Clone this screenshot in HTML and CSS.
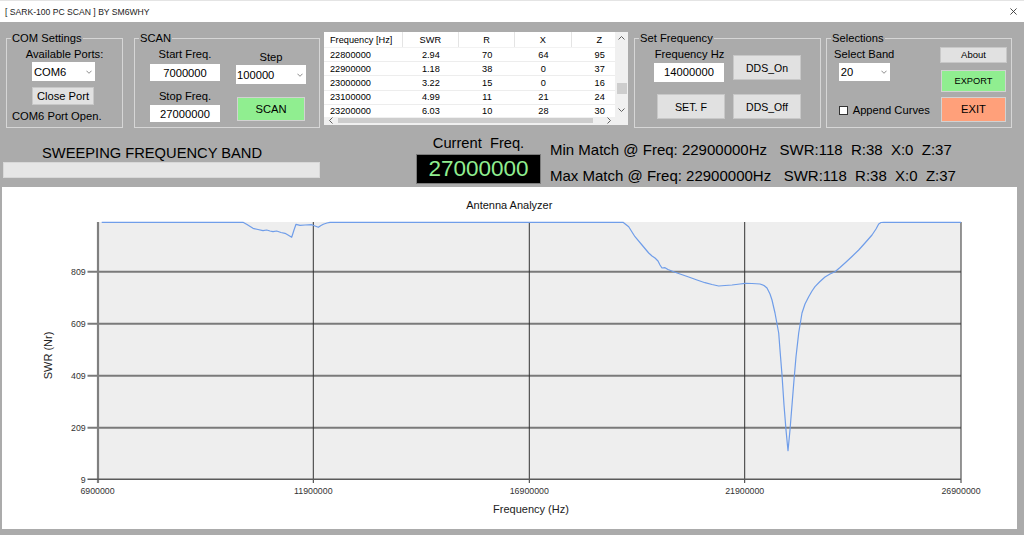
FILE: index.html
```html
<!DOCTYPE html>
<html>
<head>
<meta charset="utf-8">
<title>SARK-100 PC SCAN</title>
<link rel="stylesheet" href="styles.css">
</head>
<body>
<div class="titlebar">
  <span class="title">[ SARK-100 PC SCAN ] BY SM6WHY</span>
  <svg class="close" viewBox="0 0 8 8"><path d="M0.5 0.5 L7.5 7.5 M7.5 0.5 L0.5 7.5" stroke="#333" stroke-width="1" fill="none"/></svg>
</div>

<div class="top">
  <fieldset class="grp com">
    <legend>COM Settings</legend>
    <div class="com-body">
      <div class="lbl lbl-ports">Available Ports:</div>
      <div class="combo combo-com"><span>COM6</span><svg class="chev" viewBox="0 0 7 4"><polyline points="0.5,0.5 3.5,3.5 6.5,0.5" fill="none" stroke="#7a7a7a" stroke-width="1"/></svg></div>
      <div class="btn btn-close">Close Port</div>
      <div class="lbl status">COM6 Port Open.</div>
    </div>
  </fieldset>

  <fieldset class="grp scan">
    <legend>SCAN</legend>
    <div class="scan-body">
      <div class="col scan-c1">
        <div class="lbl">Start Freq.</div>
        <div class="input in-start">7000000</div>
        <div class="lbl lbl-stop">Stop Freq.</div>
        <div class="input in-stop">27000000</div>
      </div>
      <div class="col scan-c2">
        <div class="lbl">Step</div>
        <div class="combo combo-step"><span>100000</span><svg class="chev" viewBox="0 0 7 4"><polyline points="0.5,0.5 3.5,3.5 6.5,0.5" fill="none" stroke="#7a7a7a" stroke-width="1"/></svg></div>
        <div class="btn btn-green btn-scan">SCAN</div>
      </div>
    </div>
  </fieldset>

  <div class="dgv">
    <div class="dgv-main">
      <div class="dgv-view">
        <div class="dgv-row dgv-head"><span>Frequency [Hz]</span><span>SWR</span><span>R</span><span>X</span><span>Z</span></div>
        <div class="dgv-row"><span>22800000</span><span>2.94</span><span>70</span><span>64</span><span>95</span></div>
        <div class="dgv-row"><span>22900000</span><span>1.18</span><span>38</span><span>0</span><span>37</span></div>
        <div class="dgv-row"><span>23000000</span><span>3.22</span><span>15</span><span>0</span><span>16</span></div>
        <div class="dgv-row"><span>23100000</span><span>4.99</span><span>11</span><span>21</span><span>24</span></div>
        <div class="dgv-row"><span>23200000</span><span>6.03</span><span>10</span><span>28</span><span>30</span></div>
      </div>
      <div class="vscroll">
        <div class="sb-arrow sb-up"><svg viewBox="0 0 7 4"><polyline points="0.5,3.5 3.5,0.5 6.5,3.5" fill="none" stroke="#606060" stroke-width="1"/></svg></div>
        <div class="vthumb"></div>
        <div class="sb-arrow sb-down"><svg viewBox="0 0 7 4"><polyline points="0.5,0.5 3.5,3.5 6.5,0.5" fill="none" stroke="#606060" stroke-width="1"/></svg></div>
      </div>
    </div>
    <div class="hscroll">
      <div class="hs-arrow"><svg viewBox="0 0 4 7"><polyline points="3.5,0.5 0.5,3.5 3.5,6.5" fill="none" stroke="#606060" stroke-width="1"/></svg></div>
      <div class="hthumb"></div>
      <div class="hs-arrow hs-right"><svg viewBox="0 0 4 7"><polyline points="0.5,0.5 3.5,3.5 0.5,6.5" fill="none" stroke="#606060" stroke-width="1"/></svg></div>
      <div class="hs-corner"></div>
    </div>
  </div>

  <fieldset class="grp setf">
    <legend>Set Frequency</legend>
    <div class="setf-body">
      <div class="col sf-c1">
        <div class="lbl lbl-fhz">Frequency Hz</div>
        <div class="input in-freq">14000000</div>
        <div class="btn btn-setf">SET. F</div>
      </div>
      <div class="col sf-c2">
        <div class="btn btn-on">DDS_On</div>
        <div class="btn btn-off">DDS_Off</div>
      </div>
    </div>
  </fieldset>

  <fieldset class="grp sel">
    <legend>Selections</legend>
    <div class="sel-body">
      <div class="col sel-c1">
        <div class="lbl">Select Band</div>
        <div class="combo combo-band"><span>20</span><svg class="chev" viewBox="0 0 7 4"><polyline points="0.5,0.5 3.5,3.5 6.5,0.5" fill="none" stroke="#7a7a7a" stroke-width="1"/></svg></div>
        <div class="chk-row"><span class="chk"></span><span>Append Curves</span></div>
      </div>
      <div class="col sel-c2">
        <div class="btn btn-about">About</div>
        <div class="btn btn-green btn-export">EXPORT</div>
        <div class="btn btn-exit">EXIT</div>
      </div>
    </div>
  </fieldset>
</div>

<div class="mid">
  <div class="sweep">
    <div class="sweep-lbl">SWEEPING FREQUENCY BAND</div>
    <div class="progress"></div>
  </div>
  <div class="cur">
    <div class="cur-lbl">Current  Freq.</div>
    <div class="display">27000000</div>
  </div>
  <div class="match">
    <div class="match-line">Min Match @ Freq: 22900000Hz   SWR:118  R:38  X:0  Z:37</div>
    <div class="match-line">Max Match @ Freq: 22900000Hz   SWR:118  R:38  X:0  Z:37</div>
  </div>
</div>

<div class="chart">
  <svg class="chart-svg" width="1015" height="342" viewBox="2 187 1015 342">
    <text class="ch-title" x="509.3" y="209" text-anchor="middle">Antenna Analyzer</text>
    <rect x="98" y="222" width="863" height="257.3" fill="#eeeeee"/>
    <g stroke="#7a7a7a" stroke-width="2">
      <line x1="87.5" y1="271.7" x2="961" y2="271.7"/>
      <line x1="87.5" y1="323.8" x2="961" y2="323.8"/>
      <line x1="87.5" y1="375.7" x2="961" y2="375.7"/>
      <line x1="87.5" y1="427.7" x2="961" y2="427.7"/>
    </g>
    <g stroke="#333" stroke-width="1">
      <line x1="313.3" y1="222" x2="313.3" y2="483"/>
      <line x1="529.3" y1="222" x2="529.3" y2="483"/>
      <line x1="744.7" y1="222" x2="744.7" y2="483"/>
      <line x1="961" y1="222" x2="961" y2="483"/>
    </g>
    <line x1="98" y1="222" x2="98" y2="483" stroke="#808080" stroke-width="2.2"/>
    <line x1="87.5" y1="479.3" x2="961" y2="479.3" stroke="#5a5a5a" stroke-width="1.6"/>
    <polyline fill="none" stroke="#6f9de9" stroke-width="1.2" stroke-linejoin="round" points="101.7,222.3 243,222.3 247,224.5 253,228.3 258,229.5 263,230.7 266.7,230 270,231 273,231.7 276.7,231 281,232.5 285,233.3 288,235 291.7,237.3 294,230 296,224.3 300,225.3 305,225 311.7,224.7 315,226 318.3,227.3 321,225.5 323.3,224.3 327,223 330,222.3 623,222.3 628.7,226.7 632,232 635,236.7 642,245 648.7,253 652,256 655,258 658,261 660,265 662,268 665,267.7 668,269.5 673.7,271.7 680,274 688.7,277 697,280 705,282.7 712,284.5 718.7,286 725,285.5 732,285 740,284 745,283.3 752,283.5 760,284 764,285.5 767,288 770,294 772,300 775,313 778.7,333 780,350 782,375 784,405 786,430 788,450.7 790,430 792,405 794,380 796,356.7 798.7,333 802,313 805,304 808.7,296.7 812,291 815,286.7 820,281.5 825,277 830,274 835,271.7 840,267.5 845,263 852,256.5 858.7,250 865,243 872,235 876,229 878.7,224 881,222.5 883.7,222.3 961,222.3"/>
    <g class="ax-lbl" text-anchor="end">
      <text x="85.7" y="274.9">809</text>
      <text x="85.7" y="327">609</text>
      <text x="85.7" y="378.9">409</text>
      <text x="85.7" y="430.9">209</text>
      <text x="85.7" y="482.5">9</text>
    </g>
    <g class="ax-lbl" text-anchor="middle">
      <text x="97.5" y="493.9">6900000</text>
      <text x="313.3" y="493.9">11900000</text>
      <text x="529.3" y="493.9">16900000</text>
      <text x="744.7" y="493.9">21900000</text>
      <text x="961" y="493.9">26900000</text>
    </g>
    <text class="ax-title" x="52" y="355.5" text-anchor="middle" transform="rotate(-90 52 355.5)">SWR (Nr)</text>
    <text class="ax-title" x="531" y="513.3" text-anchor="middle">Frequency (Hz)</text>
  </svg>
</div>
</body>
</html>
```

FILE: styles.css
```css
* { box-sizing: border-box; }
html, body { margin: 0; padding: 0; }
body {
  width: 1024px;
  height: 535px;
  overflow: hidden;
  background: #ababab;
  font-family: "Liberation Sans", Arial, sans-serif;
  font-size: 11.2px;
  color: #000;
}

/* title bar */
.titlebar {
  height: 22px;
  background: #fff;
  border-top: 1px solid #e4e4e4;
  display: flex;
  align-items: center;
  justify-content: space-between;
  padding: 0 7px 0 5px;
}
.title { font-size: 8.6px; color: #222; white-space: pre; }
.close { width: 7px; height: 7px; display: block; }

/* top controls */
.top {
  height: 106px;
  padding-top: 10px;
  display: flex;
  align-items: flex-start;
}
.grp {
  margin: 0;
  padding: 0;
  border: 1px solid #d6d6d6;
  height: 96px;
  min-width: 0;
}
.grp legend {
  margin-left: 4px;
  padding: 0 1px;
  font-size: 11.2px;
  line-height: 12px;
}
.lbl { line-height: 13px; white-space: nowrap; }
.col { display: flex; flex-direction: column; align-items: center; }

.combo {
  display: flex;
  align-items: center;
  justify-content: space-between;
  background: #fff;
  padding: 0 3px 0 2px;
  white-space: nowrap;
}
.chev { width: 6px; height: 4px; display: block; }
.input {
  background: #fff;
  display: flex;
  align-items: center;
  justify-content: center;
}
.btn {
  background: #e1e1e1;
  border: 1px solid #c8c8c8;
  display: flex;
  align-items: center;
  justify-content: center;
  white-space: nowrap;
}
.btn-green { background: #90ee90; border-color: #d2d2d2; }

/* COM settings */
.com { width: 117px; margin-left: 6px; }
.com-body { display: flex; flex-direction: column; padding-top: 3.5px; }
.lbl-ports { align-self: center; }
.combo-com { margin: 1.5px 0 0 25px; width: 63px; height: 19px; }
.btn-close { margin: 6px 0 0 25px; width: 62px; height: 17.5px; }
.status { margin: 5px 0 0 5px; }

/* SCAN */
.scan { width: 186px; margin-left: 11px; }
.scan-body {
  display: grid;
  grid-template-columns: 70px 70px;
  column-gap: 16px;
  padding-left: 15px;
}
.scan-c1 { padding-top: 3.8px; }
.in-start { margin-top: 3px; width: 70px; height: 17.5px; }
.lbl-stop { margin-top: 8.9px; }
.in-stop { margin-top: 2.1px; width: 70px; height: 17px; }
.scan-c2 { padding-top: 6.8px; }
.combo-step { margin-top: 1.5px; width: 70px; height: 18.7px; padding-left: 1px; }
.btn-scan { margin-top: 12.7px; width: 68px; height: 24.3px; }

/* data grid */
.dgv {
  width: 304px;
  height: 93px;
  margin-left: 4px;
  background: #fff;
  display: flex;
  flex-direction: column;
  font-size: 9.2px;
}
.dgv-main { display: flex; height: 84.7px; }
.dgv-view { width: 291px; overflow: hidden; }
.dgv-row {
  display: grid;
  grid-template-columns: 78.7px 56.3px 56.3px 56.3px 56.3px;
  width: 304px;
  height: 14.1px;
  align-items: center;
  border-bottom: 1px solid #ededed;
}
.dgv-row span { text-align: center; white-space: nowrap; }
.dgv-row span:first-child { text-align: left; padding-left: 6px; }
.dgv-head { height: 16.3px; border-bottom: 1px solid #f2f2f2; }
.dgv-head span {
  height: 100%;
  display: flex;
  align-items: center;
  justify-content: center;
  border-right: 1px solid #e4e4e4;
}
.dgv-head span:first-child { justify-content: flex-start; }

.vscroll {
  width: 13px;
  background: #f0f0f0;
  display: flex;
  flex-direction: column;
  align-items: center;
}
.sb-arrow { height: 13px; width: 13px; display: flex; align-items: center; justify-content: center; }
.sb-arrow svg { width: 7px; height: 4px; display: block; }
.vthumb { margin-top: 38.3px; width: 10px; height: 11px; background: #cdcdcd; }
.sb-down { margin-top: 9.7px; }

.hscroll {
  height: 8.3px;
  background: #f0f0f0;
  display: flex;
  align-items: center;
}
.hs-arrow { width: 13px; height: 8px; display: flex; align-items: center; justify-content: center; }
.hs-arrow svg { width: 4px; height: 7px; display: block; }
.hthumb { margin-left: 1px; width: 255px; height: 5px; background: #cdcdcd; }
.hs-right { margin-left: 9px; }
.hs-corner { width: 13px; height: 100%; background: #f0f0f0; }

/* Set frequency */
.setf { width: 187px; margin-left: 6px; }
.setf-body {
  display: grid;
  grid-template-columns: 71px 68px;
  column-gap: 8px;
  padding-left: 19px;
}
.sf-c1 { padding-top: 3.8px; align-items: flex-start; }
.lbl-fhz { align-self: center; }
.in-freq { margin-top: 2px; width: 70px; height: 19px; }
.btn-setf { margin: 12.6px 0 0 3px; width: 68px; height: 24.7px; font-size: 10.7px; }
.btn-on { margin-top: 11px; width: 68px; height: 25px; font-size: 10.5px; }
.btn-off { margin-top: 14px; width: 68px; height: 25px; font-size: 10.5px; }

/* Selections */
.sel { width: 186px; margin-left: 5px; }
.sel-body {
  display: grid;
  grid-template-columns: 106px 67px;
  padding-left: 7px;
}
.sel-c1 { padding-top: 3.5px; align-items: flex-start; }
.combo-band { margin: 2.2px 0 0 4.7px; width: 51px; height: 18.5px; }
.chk-row {
  margin: 23.3px 0 0 5px;
  display: flex;
  align-items: center;
  line-height: 13px;
  white-space: nowrap;
}
.chk {
  width: 9px;
  height: 9px;
  background: #fff;
  border: 1px solid #333;
  margin-right: 4.7px;
}
.sel-c2 { align-items: flex-start; }
.btn-about { margin-top: 2.7px; width: 67px; height: 16px; font-size: 9.5px; }
.btn-export { margin: 7.3px 0 0 1px; width: 65px; height: 21.7px; font-size: 9.3px; }
.btn-exit { margin: 5.6px 0 0 1px; width: 65px; height: 24.4px; background: #ffa07a; border-color: #d2d2d2; }

/* middle row */
.mid {
  height: 59px;
  display: flex;
  align-items: flex-start;
}
.sweep { width: 317px; margin-left: 3px; padding-top: 16.5px; }
.sweep-lbl { font-size: 14.7px; line-height: 17px; margin-left: 39px; white-space: nowrap; }
.progress {
  margin-top: 0.5px;
  height: 16px;
  background: #e6e6e6;
  border: 1px solid #d8d8d8;
}
.cur {
  width: 125px;
  margin-left: 96px;
  padding-top: 6.8px;
  display: flex;
  flex-direction: column;
  align-items: center;
}
.cur-lbl { font-size: 14.7px; line-height: 17px; white-space: pre; }
.display {
  margin-top: 2.5px;
  width: 125px;
  height: 30px;
  background: #000;
  border: 1px solid #7c7c7c;
  color: #90ee90;
  font-size: 22.5px;
  display: flex;
  align-items: center;
  justify-content: center;
}
.match {
  margin-left: 9px;
  padding-top: 12.5px;
  font-size: 15px;
  line-height: 17px;
  display: flex;
  flex-direction: column;
  row-gap: 9px;
}
.match-line { white-space: pre; }

/* chart */
.chart {
  margin-left: 2px;
  width: 1015px;
  height: 342px;
  background: #fff;
}
.chart-svg { display: block; }
.ch-title { font-size: 11px; fill: #111; font-family: "Liberation Sans", Arial, sans-serif; }
.ax-lbl text { font-size: 8.8px; fill: #333; font-family: "Liberation Sans", Arial, sans-serif; }
.ax-title { font-size: 11px; fill: #222; font-family: "Liberation Sans", Arial, sans-serif; }
```
